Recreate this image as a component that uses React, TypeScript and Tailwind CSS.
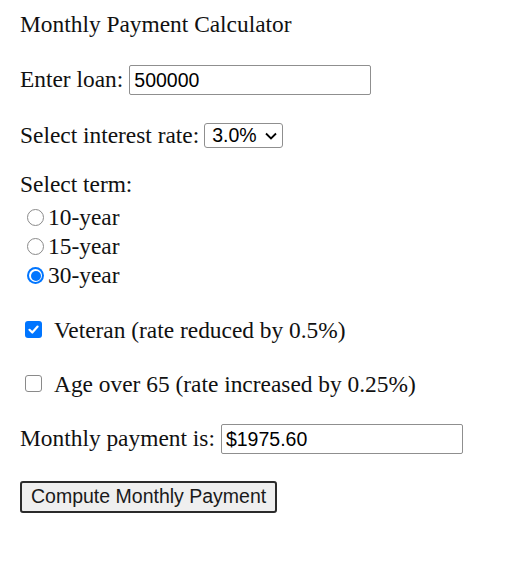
import { useState } from "react";

const TERMS = ["10-year", "15-year", "30-year"];

function Radio({ checked }: { checked: boolean }) {
  return checked ? (
    <span className="flex h-[17px] w-[17px] shrink-0 items-center justify-center rounded-full bg-[#0075ff]">
      <span className="flex h-[13px] w-[13px] items-center justify-center rounded-full bg-white">
        <span className="h-[10px] w-[10px] rounded-full bg-[#0075ff]" />
      </span>
    </span>
  ) : (
    <span className="h-[17px] w-[17px] shrink-0 rounded-full border border-[#8a8a8a] bg-white" />
  );
}

function Check({ checked }: { checked: boolean }) {
  return checked ? (
    <span className="flex h-[17px] w-[17px] shrink-0 items-center justify-center rounded-[3px] bg-[#0075ff]">
      <svg width="13" height="13" viewBox="0 0 13 13" fill="none">
        <path d="M2.5 6.8 L5.3 9.5 L10.6 3.6" stroke="white" strokeWidth="2.2" strokeLinecap="round" strokeLinejoin="round" />
      </svg>
    </span>
  ) : (
    <span className="h-[17px] w-[17px] shrink-0 rounded-[3px] border border-[#8a8a8a] bg-white" />
  );
}

export default function App() {
  const [term, setTerm] = useState("30-year");
  const [veteran, setVeteran] = useState(true);
  const [senior, setSenior] = useState(false);

  return (
    <div className="flex min-h-[586px] flex-col bg-white pt-[11px] pl-[20px] font-['Liberation_Serif',serif] text-[23.4px] text-[#111]">
      <div className="flex h-[28px] items-center">Monthly Payment Calculator</div>

      <div className="mt-[26px] flex h-[30px] items-center">
        <span>Enter loan:</span>
        <input
          defaultValue="500000"
          className="ml-[6px] h-[30px] w-[242px] rounded-[2px] border border-[#8f8f8f] px-[4px] font-['Liberation_Sans',Arial,sans-serif] text-[19.5px] text-black outline-none"
        />
      </div>

      <div className="mt-[28px] flex h-[25px] items-center">
        <span>Select interest rate:</span>
        <div className="ml-[5px] flex h-[25px] w-[79px] items-center rounded-[3px] border border-[#8f8f8f] pl-[7px] font-['Liberation_Sans',Arial,sans-serif] text-[19.5px] text-black">
          <span>3.0%</span>
          <svg className="ml-[7px]" width="14" height="10" viewBox="0 0 14 10" fill="none">
            <path d="M2 2.5 L7 7.5 L12 2.5" stroke="black" strokeWidth="1.8" />
          </svg>
        </div>
      </div>

      <div className="mt-[23px] flex h-[28px] items-center">Select term:</div>
      <div className="mt-[4px] flex flex-col">
        {TERMS.map((t) => (
          <label key={t} onClick={() => setTerm(t)} className="flex h-[29px] items-center gap-[4px] pl-[7px]">
            <Radio checked={term === t} />
            <span>{t}</span>
          </label>
        ))}
      </div>

      <label onClick={() => setVeteran(!veteran)} className="mt-[25px] flex h-[28px] items-center gap-[12px] pl-[5px]">
        <Check checked={veteran} />
        <span className="pt-[3px]">Veteran (rate reduced by 0.5%)</span>
      </label>

      <label onClick={() => setSenior(!senior)} className="mt-[26px] flex h-[28px] items-center gap-[12px] pl-[5px]">
        <Check checked={senior} />
        <span className="pt-[3px]">Age over 65 (rate increased by 0.25%)</span>
      </label>

      <div className="mt-[27px] flex h-[30px] items-center">
        <span>Monthly payment is:</span>
        <input
          readOnly
          value="$1975.60"
          className="ml-[6px] h-[30px] w-[242px] rounded-[2px] border border-[#8f8f8f] px-[4px] font-['Liberation_Sans',Arial,sans-serif] text-[19.5px] text-black outline-none"
        />
      </div>

      <div className="mt-[27px] flex">
        <button className="flex h-[32px] items-center rounded-[3px] border-2 border-[#2b2b2b] bg-[#efefef] px-[9px] font-['Liberation_Sans',Arial,sans-serif] text-[19.5px] text-[#1a1a1a]">
          Compute Monthly Payment
        </button>
      </div>
    </div>
  );
}
